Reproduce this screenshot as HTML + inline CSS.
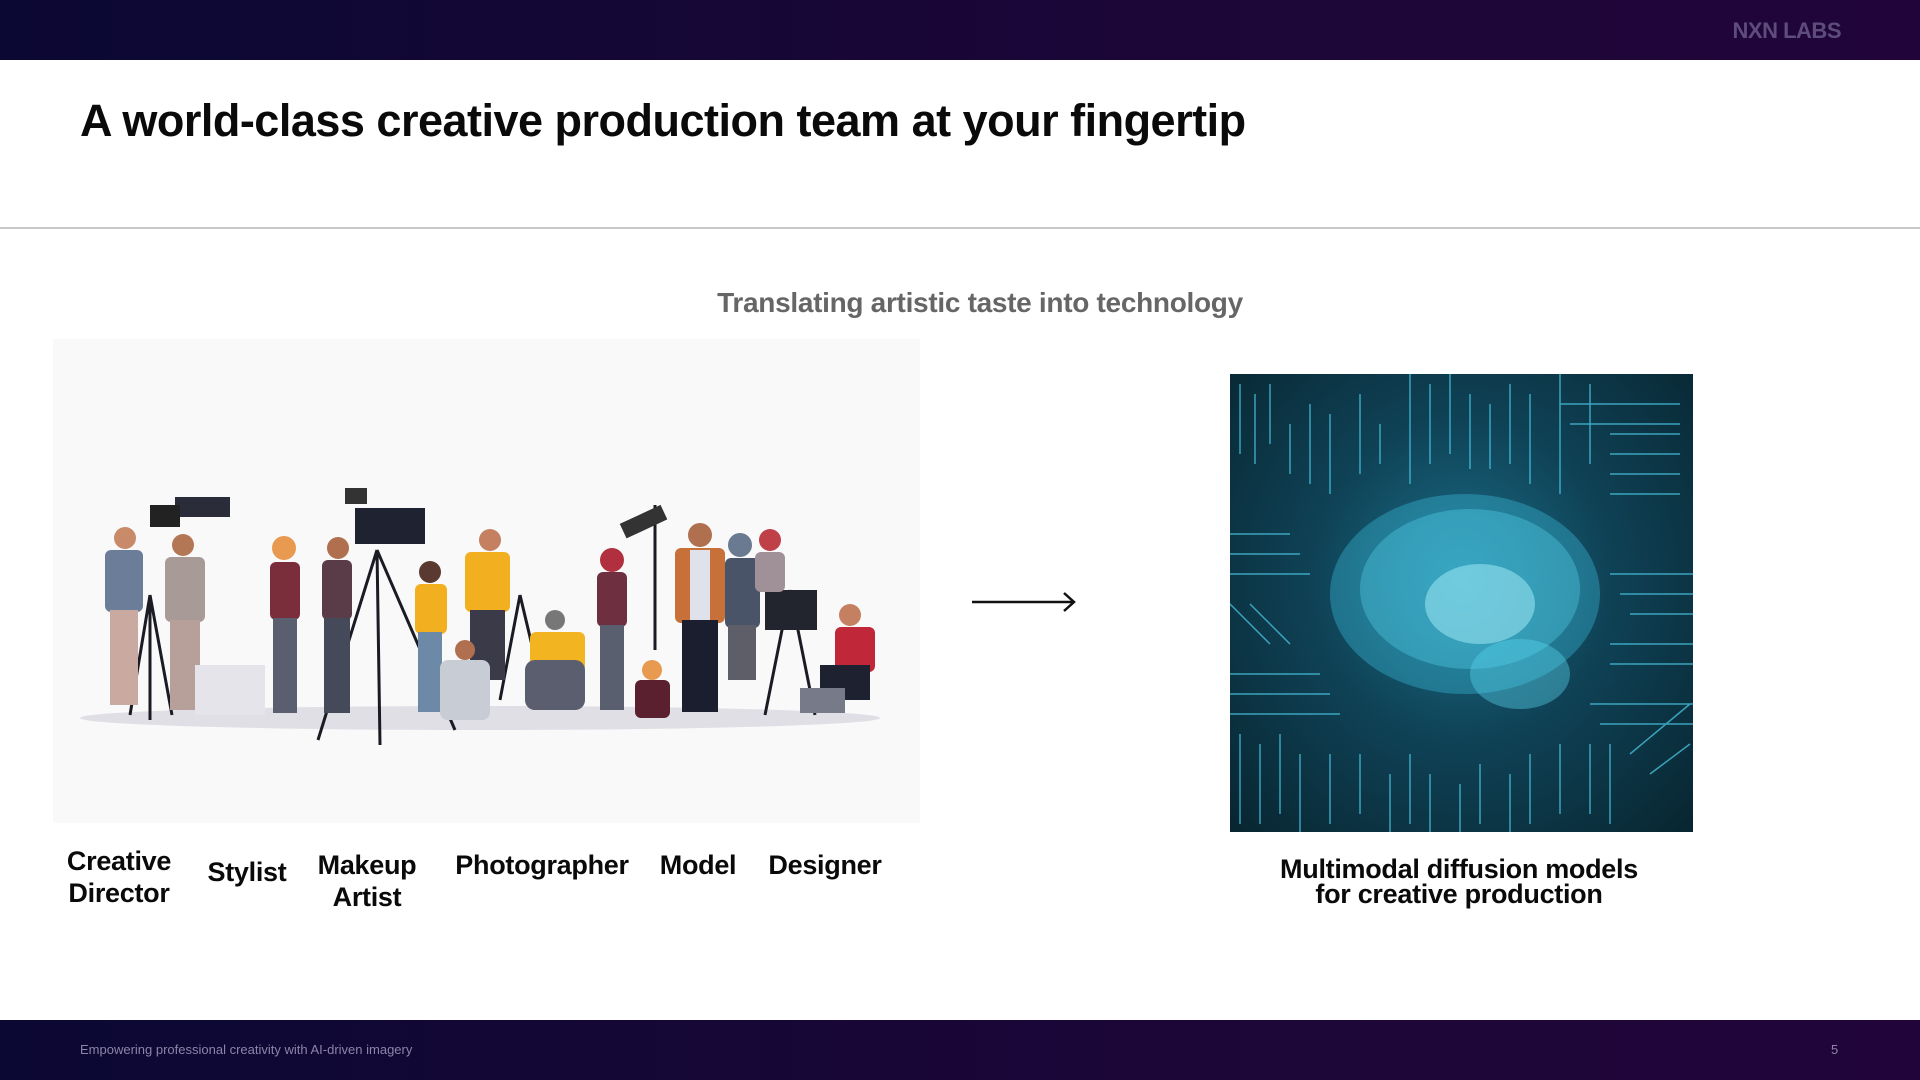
<!DOCTYPE html>
<html><head><meta charset="utf-8"><style>
*{margin:0;padding:0;box-sizing:border-box}
body{width:1920px;height:1080px;overflow:hidden;background:#fff;font-family:"Liberation Sans",sans-serif;position:relative}
.top{position:absolute;left:0;top:0;width:1920px;height:60px;background:linear-gradient(90deg,#0b0833,#1c0638 60%,#21053a)}
.logo{position:absolute;right:79px;top:18px;color:#5e4c7c;font-weight:bold;font-size:22px;letter-spacing:-0.5px}
h1{position:absolute;left:80px;top:95px;font-size:45px;font-weight:bold;color:#0a0a0a;letter-spacing:-0.5px}
.rule{position:absolute;left:0;top:227px;width:1920px;height:2px;background:#c8c8c8}
.sub{position:absolute;left:0;width:1960px;top:287px;text-align:center;font-size:28px;font-weight:bold;color:#666;letter-spacing:-0.3px}
.ill{position:absolute;left:53px;top:339px;width:867px;height:484px;background:#f9f9fa}
.lab{position:absolute;font-weight:bold;font-size:27px;color:#0a0a0a;text-align:center;line-height:32px;transform:translateX(-50%);white-space:nowrap;letter-spacing:-0.3px}
.brain{position:absolute;left:1230px;top:374px;width:463px;height:458px;background:radial-gradient(ellipse at 50% 45%,#1a6f8a 0%,#0f4256 45%,#082530 100%);overflow:hidden}
.bot{position:absolute;left:0;top:1020px;width:1920px;height:60px;background:linear-gradient(90deg,#0b0833,#1c0638 60%,#21053a)}
.ft{position:absolute;left:80px;top:1042px;font-size:13px;color:#8d84a8}
.pg{position:absolute;left:1831px;top:1042px;font-size:13px;color:#8d84a8}
</style></head><body>
<div class="top"><div class="logo">NXN LABS</div></div>
<h1>A world-class creative production team at your fingertip</h1>
<div class="rule"></div>
<div class="sub">Translating artistic taste into technology</div>
<div class="ill">
<svg width="867" height="484" viewBox="53 339 867 484">
<g opacity="0.35" fill="#b0b0bc"><ellipse cx="480" cy="718" rx="400" ry="12"/></g>
<g stroke="#1b1b24" stroke-width="3" fill="none">
<path d="M150 595 L130 715 M150 595 L150 720 M150 595 L172 715"/>
<path d="M377 550 L318 740 M377 550 L380 745 M377 550 L455 730"/>
<path d="M520 595 L500 700 M520 595 L545 700"/>
<path d="M655 505 L655 650"/>
<path d="M790 590 L765 715 M790 590 L815 715"/>
</g>
<rect x="175" y="497" width="55" height="20" fill="#2a2c3a"/><rect x="150" y="505" width="30" height="22" fill="#222"/>
<rect x="345" y="488" width="22" height="16" fill="#333"/><rect x="355" y="508" width="70" height="36" fill="#1f2230"/>
<rect x="620" y="515" width="45" height="16" fill="#333" transform="rotate(-25 640 520)"/>
<rect x="765" y="590" width="52" height="40" fill="#22242e"/>
<g>
<circle cx="125" cy="538" r="11" fill="#c98a6a"/><rect x="105" y="550" width="38" height="62" rx="6" fill="#6b7d99"/><rect x="110" y="610" width="28" height="95" fill="#c9a9a0"/>
<circle cx="183" cy="545" r="11" fill="#b47755"/><rect x="165" y="557" width="40" height="65" rx="6" fill="#a89a96"/><rect x="170" y="620" width="30" height="90" fill="#b8a09a"/>
<rect x="195" y="665" width="70" height="50" fill="#e4e4ea"/>
<circle cx="284" cy="548" r="12" fill="#e79a50"/><rect x="270" y="562" width="30" height="58" rx="6" fill="#7a2e3c"/><rect x="273" y="618" width="24" height="95" fill="#5a5f70"/>
<circle cx="338" cy="548" r="11" fill="#b07050"/><rect x="322" y="560" width="30" height="60" rx="6" fill="#5a3c48"/><rect x="324" y="618" width="26" height="95" fill="#444a5a"/>
<circle cx="430" cy="572" r="11" fill="#5a3a30"/><rect x="415" y="584" width="32" height="50" rx="6" fill="#f2b020"/><rect x="418" y="632" width="24" height="80" fill="#6c8aa8"/>
<circle cx="490" cy="540" r="11" fill="#c48060"/><rect x="465" y="552" width="45" height="60" rx="6" fill="#f2b020"/><rect x="470" y="610" width="35" height="70" fill="#3a3a48"/>
<circle cx="465" cy="650" r="10" fill="#b07050"/><rect x="440" y="660" width="50" height="60" rx="8" fill="#c8ccd4"/>
<circle cx="555" cy="620" r="10" fill="#777"/><rect x="530" y="632" width="55" height="40" rx="6" fill="#f2b420"/><rect x="525" y="660" width="60" height="50" rx="10" fill="#5a5e6e"/>
<circle cx="612" cy="560" r="12" fill="#b03040"/><rect x="597" y="572" width="30" height="55" rx="6" fill="#6e3040"/><rect x="600" y="625" width="24" height="85" fill="#5a5f70"/>
<circle cx="652" cy="670" r="10" fill="#e79a50"/><rect x="635" y="680" width="35" height="38" rx="6" fill="#5a2030"/>
<circle cx="700" cy="535" r="12" fill="#b07050"/><rect x="675" y="548" width="50" height="75" rx="6" fill="#c8703a"/><rect x="690" y="550" width="20" height="70" fill="#dfe2ea"/><rect x="682" y="620" width="36" height="92" fill="#1a1e2e"/>
<circle cx="740" cy="545" r="12" fill="#6a7a90"/><rect x="725" y="558" width="35" height="70" rx="6" fill="#4a5468"/><rect x="728" y="625" width="28" height="55" fill="#5e5e68"/>
<circle cx="770" cy="540" r="11" fill="#c04048"/><rect x="755" y="552" width="30" height="40" rx="6" fill="#a09098"/>
<circle cx="850" cy="615" r="11" fill="#c48060"/><rect x="835" y="627" width="40" height="45" rx="6" fill="#c0283a"/><rect x="820" y="665" width="50" height="35" fill="#1e2230"/><rect x="800" y="688" width="45" height="25" fill="#777a88"/>
</g>
</svg>
</div>
<svg style="position:absolute;left:970px;top:590px" width="110" height="24"><path d="M2 12 H104 M94 3 L104 12 L94 21" stroke="#111" stroke-width="2.5" fill="none"/></svg>
<div class="brain">
<svg width="463" height="458" style="position:absolute;left:0;top:0">
<g stroke="#4cc8e6" stroke-width="1.5" fill="none" opacity="0.75">
<path d="M10 10 V80 M25 20 V90 M40 10 V70 M60 50 V100 M80 30 V110 M100 40 V120 M130 20 V100 M150 50 V90 M180 0 V110 M200 10 V90 M220 0 V80 M240 20 V95 M260 30 V95 M280 10 V90 M300 20 V110 M330 0 V120 M360 10 V90 M380 60 H450 M380 80 H450 M380 100 H450 M380 120 H450 M330 30 H450 M340 50 H450"/>
<path d="M0 160 H60 M0 180 H70 M0 200 H80 M0 230 L40 270 M20 230 L60 270 M0 300 H90 M0 320 H100 M0 340 H110 M10 360 V450 M30 370 V450 M50 360 V440 M70 380 V458 M100 380 V450 M130 380 V440 M160 400 V458 M180 380 V450 M200 400 V458 M230 410 V458 M250 390 V450 M280 400 V458 M300 380 V450 M330 370 V440 M360 330 H463 M370 350 H463 M360 370 V440 M380 370 V450 M400 380 L460 330 M420 400 L460 370 M380 200 H463 M390 220 H463 M400 240 H463 M380 270 H463 M380 290 H463"/>
</g>
<ellipse cx="235" cy="220" rx="135" ry="100" fill="#3ec6e6" opacity="0.35"/>
<ellipse cx="240" cy="215" rx="110" ry="80" fill="#5ad8f0" opacity="0.35"/>
<ellipse cx="250" cy="230" rx="55" ry="40" fill="#a8f0fa" opacity="0.5"/>
<ellipse cx="290" cy="300" rx="50" ry="35" fill="#5ad8f0" opacity="0.4"/>
</svg>
</div>
<div class="lab" style="left:119px;top:845px">Creative<br>Director</div>
<div class="lab" style="left:247px;top:856px">Stylist</div>
<div class="lab" style="left:367px;top:849px">Makeup<br>Artist</div>
<div class="lab" style="left:542px;top:849px">Photographer</div>
<div class="lab" style="left:698px;top:849px">Model</div>
<div class="lab" style="left:825px;top:849px">Designer</div>
<div class="lab" style="left:1459px;top:857px;line-height:25px">Multimodal diffusion models<br>for creative production</div>
<div class="bot"></div>
<div class="ft">Empowering professional creativity with AI-driven imagery</div>
<div class="pg">5</div>
</body></html>
